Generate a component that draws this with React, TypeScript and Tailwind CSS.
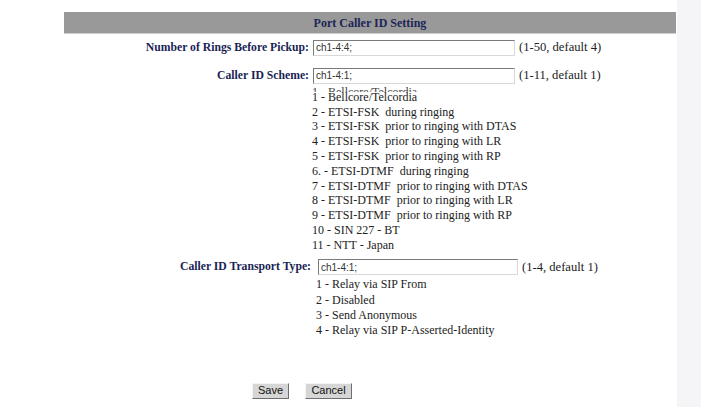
const schemes = [
  "1 - Bellcore/Telcordia",
  "2 - ETSI-FSK  during ringing",
  "3 - ETSI-FSK  prior to ringing with DTAS",
  "4 - ETSI-FSK  prior to ringing with LR",
  "5 - ETSI-FSK  prior to ringing with RP",
  "6. - ETSI-DTMF  during ringing",
  "7 - ETSI-DTMF  prior to ringing with DTAS",
  "8 - ETSI-DTMF  prior to ringing with LR",
  "9 - ETSI-DTMF  prior to ringing with RP",
  "10 - SIN 227 - BT",
  "11 - NTT - Japan",
]

const transports = [
  "1 - Relay via SIP From",
  "2 - Disabled",
  "3 - Send Anonymous",
  "4 - Relay via SIP P-Asserted-Identity",
]

function Field({ value, width }: { value: string; width: string }) {
  return (
    <input
      readOnly
      value={value}
      className={`${width} h-[16px] px-[2px] bg-white border border-t-[#7a7a7a] border-l-[#7a7a7a] border-b-[#d8d8d8] border-r-[#d8d8d8] text-[10px] text-[#333] outline-none`}
      style={{ fontFamily: '"Liberation Sans", Arial, sans-serif' }}
    />
  )
}

function Btn({ label, width }: { label: string; width: string }) {
  return (
    <button
      className={`${width} h-[16px] bg-[#d6d6d6] border border-t-[#f4f4f4] border-l-[#f4f4f4] border-b-[#6e6e6e] border-r-[#6e6e6e] text-[11px] leading-none text-[#111]`}
      style={{ fontFamily: '"Liberation Sans", Arial, sans-serif' }}
    >
      {label}
    </button>
  )
}

export default function App() {
  return (
    <div className="flex min-h-screen bg-white" style={{ fontFamily: '"Liberation Serif", "Times New Roman", serif' }}>
      <main className="flex-1">
        <div className="ml-[64px] w-[612px] pt-[12px]">
          {/* title bar */}
          <div className="h-[22px] bg-[#999999] border-b border-[#cfcfcf] flex items-center justify-center">
            <span className="text-[12px] font-bold text-[#1d2657]">Port Caller ID Setting</span>
          </div>

          {/* rings */}
          <div className="flex items-center mt-[4px] text-[12px]">
            <span className="w-[245px] text-right font-bold text-[11.7px] text-[#1a1f56]">Number of Rings Before Pickup:</span>
            <div className="ml-[4px]"><Field value="ch1-4:4;" width="w-[202px]" /></div>
            <span className="ml-[4px] text-[12.6px] text-[#222]">(1-50, default 4)</span>
          </div>

          {/* scheme */}
          <div className="flex items-center mt-[9px] text-[12px]">
            <span className="w-[245px] text-right font-bold text-[11.7px] text-[#1a1f56]">Caller ID Scheme:</span>
            <div className="ml-[4px]"><Field value="ch1-4:1;" width="w-[202px]" /></div>
            <span className="ml-[4px] text-[12.6px] text-[#222]">(1-11, default 1)</span>
          </div>

          <div className="mt-[5px] pl-[248px] text-[12px] leading-[14.8px] text-[#222]">
            {schemes.map((s, i) => (
              <div key={s} className="relative whitespace-pre">
                {i === 0 && (
                  <div className="absolute left-0 -top-[5px] h-[7px] overflow-hidden text-[#444]">{s}</div>
                )}
                {s}
              </div>
            ))}
          </div>

          {/* transport */}
          <div className="flex items-center mt-[5px] text-[12px]">
            <span className="w-[247px] text-right font-bold text-[11.7px] text-[#1a1f56]">Caller ID Transport Type:</span>
            <div className="ml-[7px]"><Field value="ch1-4:1;" width="w-[200px]" /></div>
            <span className="ml-[4px] text-[12.6px] text-[#222]">(1-4, default 1)</span>
          </div>

          <div className="mt-[1px] pl-[252px] text-[12px] leading-[15.3px] text-[#222]">
            {transports.map((t) => (
              <div key={t}>{t}</div>
            ))}
          </div>

          <div className="flex mt-[44px] pl-[188px] gap-[16px]">
            <Btn label="Save" width="w-[37px]" />
            <Btn label="Cancel" width="w-[47px]" />
          </div>
        </div>
      </main>
      <aside className="w-[24px] bg-[#f5f5f7]" />
    </div>
  )
}
